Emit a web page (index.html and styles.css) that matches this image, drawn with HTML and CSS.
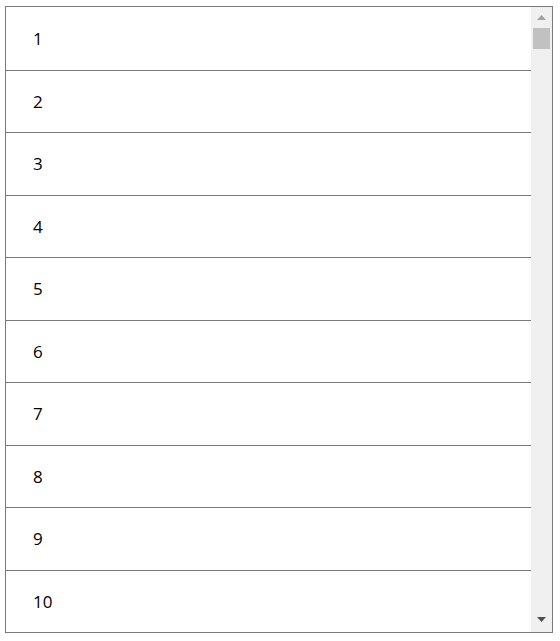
FILE: index.html
```html
<!DOCTYPE html>
<html>
<head>
<meta charset="utf-8">
<link rel="stylesheet" href="styles.css">
</head>
<body>
<div class="frame">
  <ul class="list">
    <li class="item">1</li>
    <li class="item">2</li>
    <li class="item">3</li>
    <li class="item">4</li>
    <li class="item">5</li>
    <li class="item">6</li>
    <li class="item">7</li>
    <li class="item">8</li>
    <li class="item">9</li>
    <li class="item">10</li>
  </ul>
  <div class="scrollbar">
    <div class="sb-btn sb-up">
      <svg width="9" height="5" viewBox="0 0 9 5"><polygon points="0,5 9,5 4.5,0" fill="#a3a3a3"/></svg>
    </div>
    <div class="sb-track">
      <div class="sb-thumb"></div>
    </div>
    <div class="sb-btn sb-down">
      <svg width="9" height="5" viewBox="0 0 9 5"><polygon points="0,0 9,0 4.5,5" fill="#505050"/></svg>
    </div>
  </div>
</div>
</body>
</html>
```
FILE: styles.css
```css
html, body {
  margin: 0;
  padding: 0;
  background: #ffffff;
}
body {
  padding: 6px 0 0 5px;
  font-family: "Open Sans", "Noto Sans", "Liberation Sans", sans-serif;
}
.frame {
  box-sizing: border-box;
  width: 548px;
  height: 627px;
  border: 1px solid #7a7a7a;
  display: flex;
  overflow: hidden;
}
.list {
  flex: 1;
  margin: 0;
  padding: 0;
  list-style: none;
  overflow: hidden;
}
.item {
  box-sizing: border-box;
  height: 62.5px;
  border-top: 1px solid #7a7a7a;
  display: flex;
  align-items: center;
  padding-left: 27px;
  font-size: 17px;
  color: #000;
}
.item:first-child {
  border-top: none;
}
.scrollbar {
  width: 21px;
  flex: none;
  background: #f0f0f0;
  display: flex;
  flex-direction: column;
}
.sb-btn {
  height: 21px;
  flex: none;
  display: flex;
  align-items: center;
  justify-content: center;
}
.sb-up { align-items: flex-start; padding-top: 8px; box-sizing: border-box; }
.sb-down { align-items: flex-end; padding-bottom: 10px; box-sizing: border-box; }
.sb-track {
  flex: 1;
  padding: 0 2px;
}
.sb-thumb {
  height: 21px;
  background: #c1c1c1;
}
```
